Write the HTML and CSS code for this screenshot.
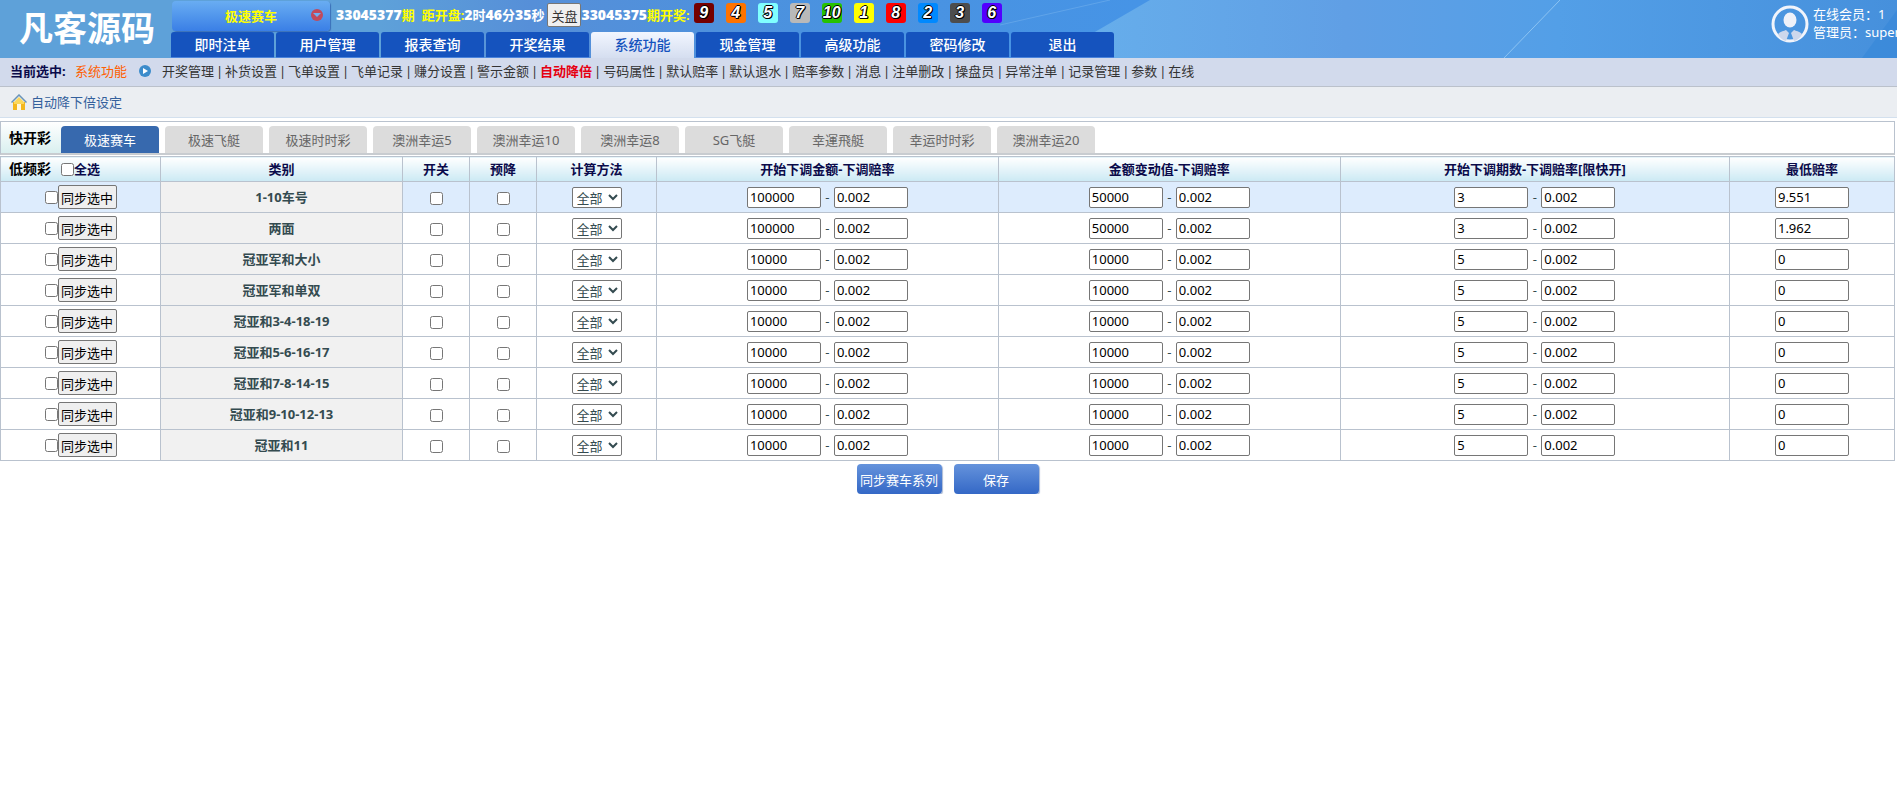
FILE: index.html
```html
<!DOCTYPE html>
<html lang="zh-CN">
<head>
    <meta charset="UTF-8">
    <meta name="viewport" content="width=device-width, initial-scale=1.0">
    <title>自动降下倍设定</title>
    <link rel="stylesheet" href="styles.css">
</head>
<body>
    <header class="header">
        <svg class="header-bg" viewBox="0 0 1897 58" preserveAspectRatio="none" aria-hidden="true">
            <defs>
                <linearGradient id="sky">
                    <stop offset="0" stop-color="#5ea1d9"/>
                    <stop offset="0.2" stop-color="#5ea1d9"/>
                    <stop offset="0.28" stop-color="#568fd8"/>
                    <stop offset="0.42" stop-color="#4b92df"/>
                    <stop offset="0.6" stop-color="#4694e6"/>
                </linearGradient>
                <linearGradient id="beam">
                    <stop offset="0" stop-color="#67b0ec"/>
                    <stop offset="0.35" stop-color="#609fe5"/>
                    <stop offset="0.6" stop-color="#539fe7"/>
                    <stop offset="1" stop-color="#4690dc"/>
                </linearGradient>
            </defs>
            <rect width="1897" height="58" fill="url(#sky)"/>
            <path d="M1150 0H1897V58H1050Z" fill="url(#beam)"/>
            <path d="M1000 25L1110 0" stroke="#78b4ee" opacity="0.5"/>
            <path d="M1560 0L1504 58" stroke="#8cc3f2"/>
            <path d="M1897 10L1862 58H1897Z" fill="#3587d8" opacity="0.6"/>
        </svg>
        <div class="logo">凡客源码</div>
        <div class="header-main">
            <div class="status">
                <div class="game-select">
                    <select aria-label="彩种">
                        <option>极速赛车</option>
                    </select>
                    <svg class="game-arrow" viewBox="0 0 12 12" aria-hidden="true">
                        <circle cx="6" cy="6" r="6" fill="#c04a5c"/>
                        <path d="M2 4H10L6 8Z" fill="#6cb0f4"/>
                    </svg>
                </div>
                <div class="period"><b>33045377</b>期</div>
                <div class="period countdown">距开盘:<b>2</b><i>时</i><b>46</b><i>分</i><b>35</b><i>秒</i></div>
                <button class="btn-close" type="button">关盘</button>
                <div class="period"><b>33045375</b>期开奖:</div>
                <div class="balls">
                    <span class="ball n9">9</span>
                    <span class="ball n4">4</span>
                    <span class="ball n5">5</span>
                    <span class="ball n7">7</span>
                    <span class="ball n10">10</span>
                    <span class="ball n1">1</span>
                    <span class="ball n8">8</span>
                    <span class="ball n2">2</span>
                    <span class="ball n3">3</span>
                    <span class="ball n6">6</span>
                </div>
            </div>
            <nav class="nav">
                <a href="#">即时注单</a>
                <a href="#">用户管理</a>
                <a href="#">报表查询</a>
                <a href="#">开奖结果</a>
                <a href="#" class="active">系统功能</a>
                <a href="#">现金管理</a>
                <a href="#">高级功能</a>
                <a href="#">密码修改</a>
                <a href="#">退出</a>
            </nav>
        </div>
        <div class="user">
            <svg class="avatar" viewBox="0 0 38 38" aria-hidden="true">
                <circle cx="19" cy="19" r="17" fill="none" stroke="#f1f4fb" stroke-width="3"/>
                <ellipse cx="19" cy="15" rx="6.5" ry="7.5" fill="#eef1f9"/>
                <path d="M7 29C10 26 13 26 15 25L18 28L15 36C11 35 8 32 7 29Z" fill="#cdd7ec"/>
                <path d="M31 29C28 26 25 26 23 25L20 28L23 36C27 35 30 32 31 29Z" fill="#cdd7ec"/>
            </svg>
            <div class="user-info">
                <div>在线会员：1</div>
                <div>管理员：super</div>
            </div>
        </div>
    </header>

    <nav class="subnav">
        <b class="current">当前选中:</b>
        <span class="current-name">系统功能</span>
        <svg class="play" viewBox="0 0 12 12" aria-hidden="true">
            <circle cx="6" cy="6" r="6" fill="#3c8ccb"/>
            <path d="M4 3L9 6L4 9Z" fill="#fff"/>
        </svg>
        <a href="#">开奖管理</a><i>|</i>
        <a href="#">补货设置</a><i>|</i>
        <a href="#">飞单设置</a><i>|</i>
        <a href="#">飞单记录</a><i>|</i>
        <a href="#">赚分设置</a><i>|</i>
        <a href="#">警示金额</a><i>|</i>
        <a href="#" class="on">自动降倍</a><i>|</i>
        <a href="#">号码属性</a><i>|</i>
        <a href="#">默认赔率</a><i>|</i>
        <a href="#">默认退水</a><i>|</i>
        <a href="#">赔率参数</a><i>|</i>
        <a href="#">消息</a><i>|</i>
        <a href="#">注单删改</a><i>|</i>
        <a href="#">操盘员</a><i>|</i>
        <a href="#">异常注单</a><i>|</i>
        <a href="#">记录管理</a><i>|</i>
        <a href="#">参数</a><i>|</i>
        <a href="#">在线</a>
    </nav>

    <div class="title-bar">
        <svg class="home" viewBox="0 0 16 16" aria-hidden="true">
            <path d="M2 8H14V16H2Z" fill="#f3b71e"/>
            <path d="M3 8L8 3L13 8V10H3Z" fill="#fbd75c"/>
            <path d="M6 10H10V16H6Z" fill="#fff8e0"/>
            <path d="M0.5 8.5L8 1L15.5 8.5" fill="none" stroke="#6a94b8" stroke-width="1.5"/>
        </svg>
        <span>自动降下倍设定</span>
    </div>

    <main class="main">
        <div class="tabs">
            <b class="tabs-name">快开彩</b>
            <a href="#" class="active">极速赛车</a>
            <a href="#">极速飞艇</a>
            <a href="#">极速时时彩</a>
            <a href="#">澳洲幸运5</a>
            <a href="#">澳洲幸运10</a>
            <a href="#">澳洲幸运8</a>
            <a href="#">SG飞艇</a>
            <a href="#">幸運飛艇</a>
            <a href="#">幸运时时彩</a>
            <a href="#">澳洲幸运20</a>
        </div>

        <table class="grid">
            <colgroup>
                <col class="c-sync"><col class="c-type"><col class="c-check"><col class="c-check"><col class="c-method">
                <col class="c-amount"><col class="c-amount"><col class="c-period"><col>
            </colgroup>
            <thead>
                <tr>
                    <th><div class="all"><span class="low">低频彩</span><input type="checkbox" id="all"><label for="all">全选</label></div></th>
                    <th>类别</th>
                    <th>开关</th>
                    <th>预降</th>
                    <th>计算方法</th>
                    <th>开始下调金额-下调赔率</th>
                    <th>金额变动值-下调赔率</th>
                    <th>开始下调期数-下调赔率[限快开]</th>
                    <th>最低赔率</th>
                </tr>
            </thead>
            <tbody>
                <tr class="hover">
                    <td><div class="sync"><input type="checkbox" aria-label="选中"><button type="button">同步选中</button></div></td>
                    <th scope="row">1-10车号</th>
                    <td><input type="checkbox" aria-label="开关"></td>
                    <td><input type="checkbox" aria-label="预降"></td>
                    <td><select aria-label="计算方法"><option>全部</option></select></td>
                    <td><div class="pair"><input type="text" aria-label="下调金额" value="100000"><span>-</span><input type="text" aria-label="下调赔率" value="0.002"></div></td>
                    <td><div class="pair"><input type="text" aria-label="金额变动值" value="50000"><span>-</span><input type="text" aria-label="下调赔率" value="0.002"></div></td>
                    <td><div class="pair"><input type="text" aria-label="下调期数" value="3"><span>-</span><input type="text" aria-label="下调赔率" value="0.002"></div></td>
                    <td><input type="text" aria-label="最低赔率" value="9.551"></td>
                </tr>
                <tr>
                    <td><div class="sync"><input type="checkbox" aria-label="选中"><button type="button">同步选中</button></div></td>
                    <th scope="row">两面</th>
                    <td><input type="checkbox" aria-label="开关"></td>
                    <td><input type="checkbox" aria-label="预降"></td>
                    <td><select aria-label="计算方法"><option>全部</option></select></td>
                    <td><div class="pair"><input type="text" aria-label="下调金额" value="100000"><span>-</span><input type="text" aria-label="下调赔率" value="0.002"></div></td>
                    <td><div class="pair"><input type="text" aria-label="金额变动值" value="50000"><span>-</span><input type="text" aria-label="下调赔率" value="0.002"></div></td>
                    <td><div class="pair"><input type="text" aria-label="下调期数" value="3"><span>-</span><input type="text" aria-label="下调赔率" value="0.002"></div></td>
                    <td><input type="text" aria-label="最低赔率" value="1.962"></td>
                </tr>
                <tr>
                    <td><div class="sync"><input type="checkbox" aria-label="选中"><button type="button">同步选中</button></div></td>
                    <th scope="row">冠亚军和大小</th>
                    <td><input type="checkbox" aria-label="开关"></td>
                    <td><input type="checkbox" aria-label="预降"></td>
                    <td><select aria-label="计算方法"><option>全部</option></select></td>
                    <td><div class="pair"><input type="text" aria-label="下调金额" value="10000"><span>-</span><input type="text" aria-label="下调赔率" value="0.002"></div></td>
                    <td><div class="pair"><input type="text" aria-label="金额变动值" value="10000"><span>-</span><input type="text" aria-label="下调赔率" value="0.002"></div></td>
                    <td><div class="pair"><input type="text" aria-label="下调期数" value="5"><span>-</span><input type="text" aria-label="下调赔率" value="0.002"></div></td>
                    <td><input type="text" aria-label="最低赔率" value="0"></td>
                </tr>
                <tr>
                    <td><div class="sync"><input type="checkbox" aria-label="选中"><button type="button">同步选中</button></div></td>
                    <th scope="row">冠亚军和单双</th>
                    <td><input type="checkbox" aria-label="开关"></td>
                    <td><input type="checkbox" aria-label="预降"></td>
                    <td><select aria-label="计算方法"><option>全部</option></select></td>
                    <td><div class="pair"><input type="text" aria-label="下调金额" value="10000"><span>-</span><input type="text" aria-label="下调赔率" value="0.002"></div></td>
                    <td><div class="pair"><input type="text" aria-label="金额变动值" value="10000"><span>-</span><input type="text" aria-label="下调赔率" value="0.002"></div></td>
                    <td><div class="pair"><input type="text" aria-label="下调期数" value="5"><span>-</span><input type="text" aria-label="下调赔率" value="0.002"></div></td>
                    <td><input type="text" aria-label="最低赔率" value="0"></td>
                </tr>
                <tr>
                    <td><div class="sync"><input type="checkbox" aria-label="选中"><button type="button">同步选中</button></div></td>
                    <th scope="row">冠亚和3-4-18-19</th>
                    <td><input type="checkbox" aria-label="开关"></td>
                    <td><input type="checkbox" aria-label="预降"></td>
                    <td><select aria-label="计算方法"><option>全部</option></select></td>
                    <td><div class="pair"><input type="text" aria-label="下调金额" value="10000"><span>-</span><input type="text" aria-label="下调赔率" value="0.002"></div></td>
                    <td><div class="pair"><input type="text" aria-label="金额变动值" value="10000"><span>-</span><input type="text" aria-label="下调赔率" value="0.002"></div></td>
                    <td><div class="pair"><input type="text" aria-label="下调期数" value="5"><span>-</span><input type="text" aria-label="下调赔率" value="0.002"></div></td>
                    <td><input type="text" aria-label="最低赔率" value="0"></td>
                </tr>
                <tr>
                    <td><div class="sync"><input type="checkbox" aria-label="选中"><button type="button">同步选中</button></div></td>
                    <th scope="row">冠亚和5-6-16-17</th>
                    <td><input type="checkbox" aria-label="开关"></td>
                    <td><input type="checkbox" aria-label="预降"></td>
                    <td><select aria-label="计算方法"><option>全部</option></select></td>
                    <td><div class="pair"><input type="text" aria-label="下调金额" value="10000"><span>-</span><input type="text" aria-label="下调赔率" value="0.002"></div></td>
                    <td><div class="pair"><input type="text" aria-label="金额变动值" value="10000"><span>-</span><input type="text" aria-label="下调赔率" value="0.002"></div></td>
                    <td><div class="pair"><input type="text" aria-label="下调期数" value="5"><span>-</span><input type="text" aria-label="下调赔率" value="0.002"></div></td>
                    <td><input type="text" aria-label="最低赔率" value="0"></td>
                </tr>
                <tr>
                    <td><div class="sync"><input type="checkbox" aria-label="选中"><button type="button">同步选中</button></div></td>
                    <th scope="row">冠亚和7-8-14-15</th>
                    <td><input type="checkbox" aria-label="开关"></td>
                    <td><input type="checkbox" aria-label="预降"></td>
                    <td><select aria-label="计算方法"><option>全部</option></select></td>
                    <td><div class="pair"><input type="text" aria-label="下调金额" value="10000"><span>-</span><input type="text" aria-label="下调赔率" value="0.002"></div></td>
                    <td><div class="pair"><input type="text" aria-label="金额变动值" value="10000"><span>-</span><input type="text" aria-label="下调赔率" value="0.002"></div></td>
                    <td><div class="pair"><input type="text" aria-label="下调期数" value="5"><span>-</span><input type="text" aria-label="下调赔率" value="0.002"></div></td>
                    <td><input type="text" aria-label="最低赔率" value="0"></td>
                </tr>
                <tr>
                    <td><div class="sync"><input type="checkbox" aria-label="选中"><button type="button">同步选中</button></div></td>
                    <th scope="row">冠亚和9-10-12-13</th>
                    <td><input type="checkbox" aria-label="开关"></td>
                    <td><input type="checkbox" aria-label="预降"></td>
                    <td><select aria-label="计算方法"><option>全部</option></select></td>
                    <td><div class="pair"><input type="text" aria-label="下调金额" value="10000"><span>-</span><input type="text" aria-label="下调赔率" value="0.002"></div></td>
                    <td><div class="pair"><input type="text" aria-label="金额变动值" value="10000"><span>-</span><input type="text" aria-label="下调赔率" value="0.002"></div></td>
                    <td><div class="pair"><input type="text" aria-label="下调期数" value="5"><span>-</span><input type="text" aria-label="下调赔率" value="0.002"></div></td>
                    <td><input type="text" aria-label="最低赔率" value="0"></td>
                </tr>
                <tr>
                    <td><div class="sync"><input type="checkbox" aria-label="选中"><button type="button">同步选中</button></div></td>
                    <th scope="row">冠亚和11</th>
                    <td><input type="checkbox" aria-label="开关"></td>
                    <td><input type="checkbox" aria-label="预降"></td>
                    <td><select aria-label="计算方法"><option>全部</option></select></td>
                    <td><div class="pair"><input type="text" aria-label="下调金额" value="10000"><span>-</span><input type="text" aria-label="下调赔率" value="0.002"></div></td>
                    <td><div class="pair"><input type="text" aria-label="金额变动值" value="10000"><span>-</span><input type="text" aria-label="下调赔率" value="0.002"></div></td>
                    <td><div class="pair"><input type="text" aria-label="下调期数" value="5"><span>-</span><input type="text" aria-label="下调赔率" value="0.002"></div></td>
                    <td><input type="text" aria-label="最低赔率" value="0"></td>
                </tr>
            </tbody>
        </table>

        <div class="actions">
            <button type="button">同步赛车系列</button>
            <button type="button">保存</button>
        </div>
    </main>
</body>
</html>
```

FILE: styles.css
```css
* {
    box-sizing: border-box;
}

body {
    margin: 0;
    background: #fff;
    color: #344b50;
    font-family: "Noto Sans", "Noto Sans CJK SC", sans-serif;
    font-size: 13px;
    line-height: 20px;
    overflow-x: hidden;
}

a {
    color: inherit;
    text-decoration: none;
}

i {
    font-style: normal;
}

input,
select,
button {
    margin: 0;
    font-family: inherit;
    font-size: 13px;
}

/* 顶部 */
.header {
    position: relative;
    display: flex;
    height: 58px;
    overflow: hidden;
    color: #fff;
}

.header-bg {
    position: absolute;
    top: 0;
    left: 0;
    width: 100%;
    height: 100%;
    z-index: -1;
}

.logo {
    flex: none;
    width: 171px;
    padding-left: 19px;
    font-size: 34px;
    font-weight: bold;
    line-height: 56px;
}

.header-main {
    flex: 1;
}

.status {
    display: flex;
    height: 32px;
    padding-left: 1px;
    white-space: nowrap;
}

.game-select {
    position: relative;
    width: 158px;
    margin: 1px 6px 1px 0;
}

.game-select select {
    appearance: none;
    width: 100%;
    height: 30px;
    border: 0;
    border-radius: 4px;
    background: linear-gradient(#69adf2, #3a7fe6);
    box-shadow: 1px 1px 1px #3a6fb8;
    color: #ff0;
    font-weight: bold;
    text-align-last: center;
}

.game-arrow {
    position: absolute;
    top: 8px;
    right: 7px;
    width: 12px;
    height: 12px;
    pointer-events: none;
}

.period {
    color: #ff0;
    font-weight: bold;
    line-height: 30px;
}

.period b,
.period i {
    color: #fff;
}

.period b {
    font-size: 14px;
}

.countdown {
    margin: 0 3px 0 7px;
}

.btn-close {
    width: 34px;
    height: 24px;
    margin-top: 3px;
    padding: 0;
    border: 1px solid #767676;
    border-radius: 2px;
    background: #efefef;
    color: #333;
}

.balls {
    display: flex;
    gap: 12px;
    padding: 3px 0 0 4px;
}

.ball {
    width: 20px;
    height: 20px;
    border-radius: 3px;
    color: #fff;
    font: italic bold 16px/20px "Liberation Sans", sans-serif;
    text-align: center;
    text-shadow: 1px 0 #000, -1px 0 #000, 0 1px #000, 0 -1px #000, 1px 1px #000;
}

.n1 { background: #ff0; }
.n2 { background: #0089ff; }
.n3 { background: #4d4d4d; }
.n4 { background: #ff7300; }
.n5 { background: #80ffff; }
.n6 { background: #5200ff; }
.n7 { background: #b9b9b9; }
.n8 { background: #f00; }
.n9 { background: #750000; }
.n10 { background: #27c200; }

.nav {
    display: flex;
    gap: 2px;
}

.nav a {
    width: 103px;
    height: 26px;
    border-bottom: 1px solid #4a83dc;
    border-radius: 3px 3px 0 0;
    background: #1553be;
    font-size: 14px;
    font-weight: 500;
    line-height: 26px;
    text-align: center;
}

.nav .active {
    border: 0;
    background: linear-gradient(#f2f6ff, #d5def0);
    color: #1553be;
}

.user {
    display: flex;
    flex: none;
    gap: 4px;
    width: 126px;
    padding-top: 5px;
    white-space: nowrap;
}

.avatar {
    flex: none;
    width: 38px;
    height: 38px;
}

.user-info {
    line-height: 18px;
}

/* 二级菜单 */
.subnav {
    display: flex;
    align-items: center;
    height: 29px;
    padding: 0 0 2px 10px;
    border-bottom: 1px solid #bbc1cb;
    background: #d2daec;
    color: #333;
    white-space: nowrap;
}

.subnav i {
    width: 11px;
    text-align: center;
}

.subnav .on {
    color: #e60012;
    font-weight: bold;
}

.current {
    width: 65px;
    color: #0a0a4a;
}

.current-name {
    color: #ff6000;
}

.play {
    width: 12px;
    height: 12px;
    margin: 0 11px 0 12px;
}

.title-bar {
    display: flex;
    align-items: center;
    gap: 4px;
    height: 31px;
    padding-left: 11px;
    border-bottom: 1px solid #d3e0ee;
    background: #ebeef2;
    color: #34609c;
}

.home {
    width: 16px;
    height: 16px;
}

/* 彩种标签 */
.main {
    margin: 3px 2px 0 0;
}

.tabs {
    display: flex;
    gap: 6px;
    height: 34px;
    border: 1px solid #b9c2ce;
    border-bottom: 2px solid #c8ccd0;
}

.tabs-name {
    width: 60px;
    margin-right: -6px;
    padding-left: 8px;
    background: linear-gradient(#fff, #d9efef);
    color: #000;
    font-size: 14px;
    line-height: 32px;
}

.tabs a {
    width: 98px;
    margin-top: 4px;
    border-radius: 4px 4px 0 0;
    background: #dcdcdc;
    color: #666;
    line-height: 28px;
    text-align: center;
}

.tabs .active {
    background: #3769ae;
    color: #fff;
}

/* 设置表格 */
.grid {
    width: 100%;
    margin-top: 1px;
    border-collapse: collapse;
    table-layout: fixed;
}

.c-sync { width: 160px; }
.c-type { width: 242px; }
.c-check { width: 67px; }
.c-method { width: 120px; }
.c-amount { width: 18.05%; }
.c-period { width: 20.55%; }

.grid th,
.grid td {
    height: 31px;
    padding: 0;
    border: 1px solid #b9c2ce;
    text-align: center;
    vertical-align: middle;
}

.grid thead th {
    height: 25px;
    background: linear-gradient(#fff, #cbe9f4);
    color: #0a0a4a;
}

.grid tbody th {
    background: #f1f1f1;
}

.hover {
    background: #ddecfd;
}

.grid input[type="checkbox"] {
    width: 13px;
    height: 13px;
    vertical-align: middle;
}

.grid input[type="text"] {
    width: 74px;
    height: 21px;
    padding: 0 2px;
    border: 1px solid #767676;
    border-radius: 2px;
    color: #000;
}

.grid select {
    width: 50px;
    height: 21px;
    border: 1px solid #767676;
    border-radius: 2px;
    background: #fff;
    color: #344b50;
}

.all {
    display: flex;
    align-items: center;
    padding-left: 8px;
}

.low {
    width: 52px;
    color: #000;
    font-size: 14px;
    text-align: left;
}

.sync,
.pair {
    display: flex;
    align-items: center;
    justify-content: center;
}

.sync button {
    width: 59px;
    height: 24px;
    padding: 0;
    border: 1px solid #767676;
    border-radius: 2px;
    background: #efefef;
    color: #000;
}

.pair span {
    width: 13px;
}

.actions {
    display: flex;
    justify-content: center;
    gap: 12px;
    padding-top: 3px;
}

.actions button {
    width: 85px;
    height: 30px;
    padding: 0;
    border: 0;
    border-radius: 4px;
    background: linear-gradient(#6593dc, #3468c6);
    box-shadow: 1px 1px 1px #a9b8d4;
    color: #fff;
}
```
